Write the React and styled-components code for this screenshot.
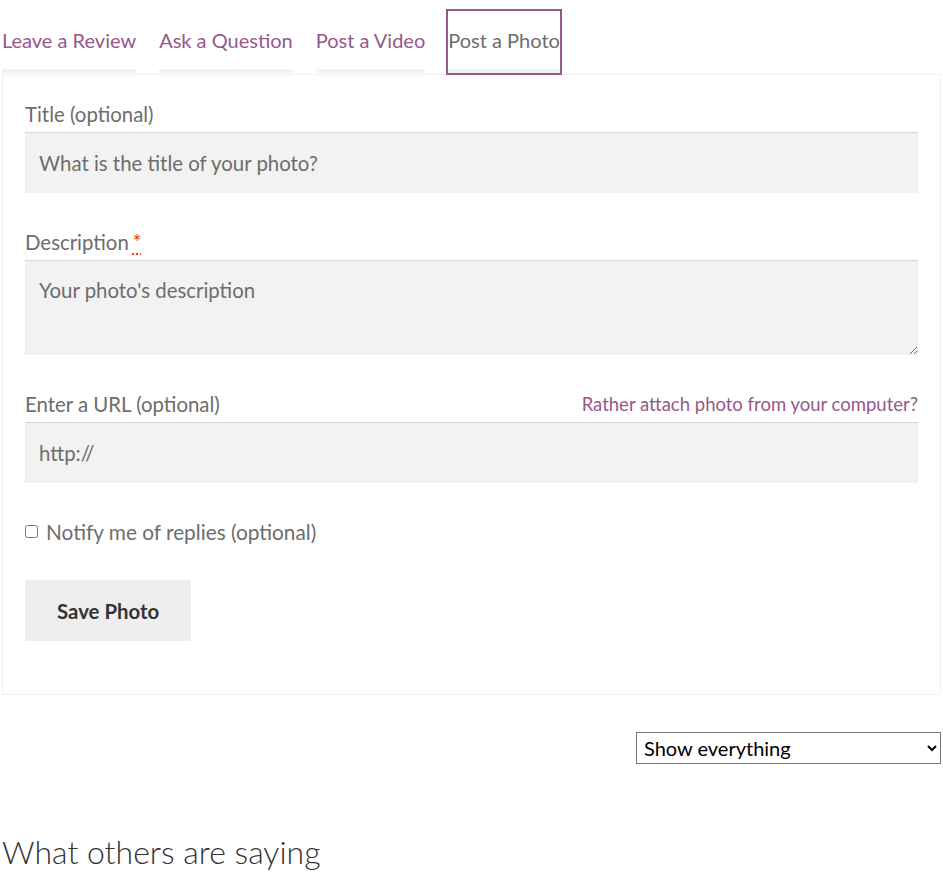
import React from "react";
import styled, { createGlobalStyle } from "styled-components";

const Global = createGlobalStyle`
  html, body { margin: 0; padding: 0; background: #fff; }
  body { font-family: Lato, "Source Sans Pro", "Noto Sans", sans-serif; color: #6d6d6d; }
  * { box-sizing: border-box; }
`;

const Page = styled.div`
  padding: 9px 2px 0 2px;
  width: 943px;
`;

const Tabs = styled.ul`
  display: flex;
  gap: 19px;
  list-style: none;
  margin: 0 0 -1px -2px;
  padding: 0;
  position: relative;
  z-index: 1;
`;

const Tab = styled.li`
  border: 2px solid ${(p) => (p.$active ? "#96588a" : "transparent")};
  padding: 14px 0 17px;
  box-shadow: inset 0 -4px 0 #f2f2f2;
  font-size: 20px;
  line-height: 31px;
  color: ${(p) => (p.$active ? "#6d6d6d" : "#96588a")};
  cursor: pointer;
  white-space: nowrap;
`;

const Panel = styled.div`
  border: 1px solid #efefef;
  padding: 24px 22px 53px;
`;

const Row = styled.div`
  margin-bottom: ${(p) => p.$mb ?? 34}px;
`;

const LabelRow = styled.div`
  display: flex;
  justify-content: space-between;
  align-items: center;
  margin-bottom: 1px;
`;

const Label = styled.label`
  font-size: 20.4px;
  line-height: 32px;
  color: #6d6d6d;
  position: relative;
  top: -1px;
`;

const Required = styled.abbr`
  color: #e2401c;
  text-decoration: underline dotted;
  text-underline-offset: 3px;
  margin-left: 4px;
  border: none;
`;

const AltLink = styled.a`
  font-size: 18.5px;
  color: #96588a;
  text-decoration: none;
  cursor: pointer;
  position: relative;
  top: -1px;
`;

const Input = styled.input`
  display: block;
  width: 100%;
  height: 61px;
  border: 0;
  padding: 0 14px;
  background: #f2f2f2;
  box-shadow: inset 0 1px 1px rgba(0, 0, 0, 0.125);
  font-family: inherit;
  font-size: 20.4px;
  color: #43454b;
  outline: none;
  &::placeholder { color: #6d6d6d; opacity: 1; }
`;

const TextArea = styled.textarea`
  display: block;
  width: 100%;
  height: 95px;
  border: 0;
  padding: 14px 14px;
  background: #f2f2f2;
  box-shadow: inset 0 1px 1px rgba(0, 0, 0, 0.125);
  font-family: inherit;
  font-size: 20.4px;
  line-height: 32px;
  color: #43454b;
  outline: none;
  resize: vertical;
  &::placeholder { color: #6d6d6d; opacity: 1; }
`;

const CheckLabel = styled.label`
  display: flex;
  align-items: center;
  font-size: 20.8px;
  line-height: 32px;
  color: #6d6d6d;
`;

const Check = styled.input`
  margin: 0 8px 0 0;
  width: 13px;
  height: 13px;
  position: relative;
  top: -1px;
`;

const Button = styled.button`
  border: 0;
  background: #eeeeee;
  color: #333333;
  font-family: inherit;
  font-weight: 700;
  font-size: 20.4px;
  height: 61px;
  padding: 0 32px;
  cursor: pointer;
`;

const FilterBar = styled.div`
  display: flex;
  justify-content: flex-end;
  margin-top: 37px;
`;

const Select = styled.select`
  width: 305px;
  height: 32px;
  border: 1px solid #767676;
  border-radius: 0;
  background: #fff;
  font-family: inherit;
  font-size: 20px;
  color: #000;
  padding: 0 3px;
`;

const Heading = styled.h2`
  margin: 69px 0 0;
  font-weight: 300;
  font-size: 32px;
  line-height: 38px;
  color: #333333;
`;

export default function App() {
  const tabs = ["Leave a Review", "Ask a Question", "Post a Video", "Post a Photo"];
  return (
    <Page>
      <Global />
      <Tabs>
        {tabs.map((t) => (
          <Tab key={t} $active={t === "Post a Photo"}>{t}</Tab>
        ))}
      </Tabs>
      <Panel>
        <Row>
          <LabelRow>
            <Label>Title (optional)</Label>
          </LabelRow>
          <Input placeholder="What is the title of your photo?" />
        </Row>
        <Row>
          <LabelRow>
            <Label>
              Description<Required title="required">*</Required>
            </Label>
          </LabelRow>
          <TextArea placeholder="Your photo's description" />
        </Row>
        <Row $mb={33}>
          <LabelRow>
            <Label>Enter a URL (optional)</Label>
            <AltLink>Rather attach photo from your computer?</AltLink>
          </LabelRow>
          <Input placeholder="http://" />
        </Row>
        <Row $mb={32}>
          <CheckLabel>
            <Check type="checkbox" />
            Notify me of replies (optional)
          </CheckLabel>
        </Row>
        <Button>Save Photo</Button>
      </Panel>
      <FilterBar>
        <Select defaultValue="all">
          <option value="all">Show everything</option>
          <option value="reviews">Show reviews</option>
          <option value="questions">Show questions</option>
          <option value="videos">Show videos</option>
          <option value="photos">Show photos</option>
        </Select>
      </FilterBar>
      <Heading>What others are saying</Heading>
    </Page>
  );
}
